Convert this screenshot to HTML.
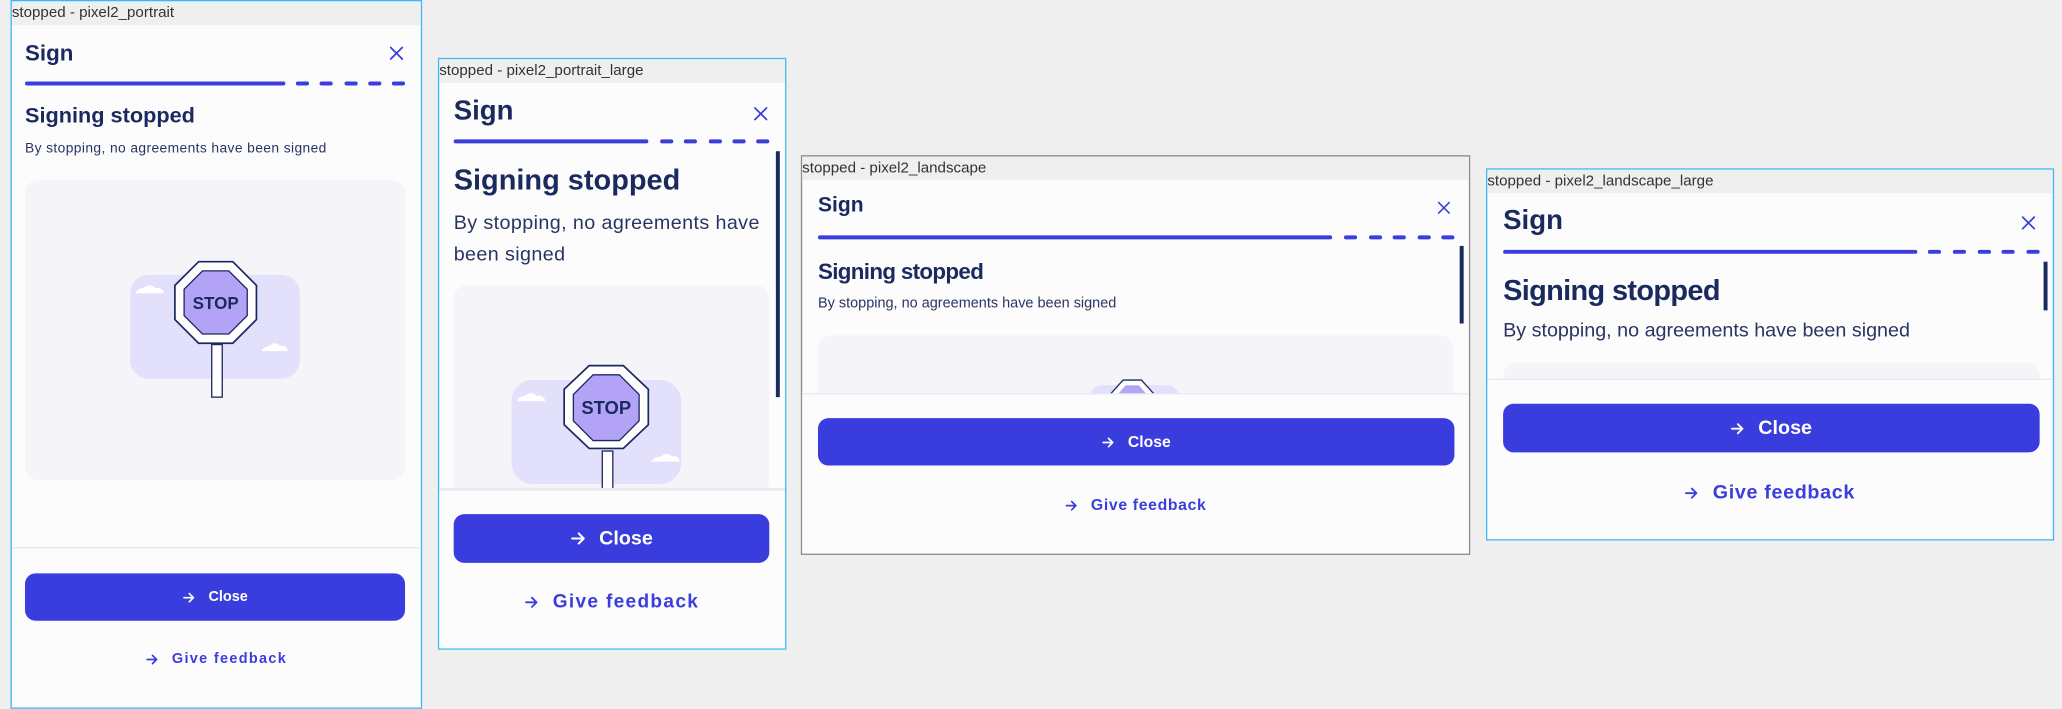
<!DOCTYPE html>
<html><head><meta charset="utf-8"><style>
*{margin:0;padding:0;box-sizing:border-box}
html,body{width:2062px;height:709px;overflow:hidden;background:#efefef;font-family:"Liberation Sans",sans-serif}
#w{position:absolute;left:0;top:0;width:1568px;height:539px;transform:scale(1.31505);transform-origin:0 0}
.f{position:absolute;background:#fcfcfd;border:1px solid #3bb8f0;overflow:hidden}
.lab{position:absolute;left:0;top:0;right:0;height:18px;background:#efefef;color:#333;font-size:11.5px;line-height:18px}
.a{position:absolute}
.nv{color:#1a2a5e;font-weight:bold}
.x{position:absolute}
.solid{position:absolute;height:3px;background:#3b3ddc;border-radius:2px}
.dash{position:absolute;height:3px;display:flex;justify-content:space-between}
.dash i{display:block;width:10px;height:3px;background:#3b3ddc;border-radius:2px}
.ill{position:absolute;background:#f4f4f9;border-radius:10px;overflow:hidden}
.btn{position:absolute;background:#3a3ddd;border-radius:8px;color:#fff;font-weight:bold;display:flex;align-items:center;justify-content:center}
.fb{position:absolute;color:#3b3ddc;font-weight:bold;display:flex;align-items:center;justify-content:center;letter-spacing:1px}
.div{position:absolute;left:0;right:0;height:1px;background:#e8e8ee}
.sb{position:absolute;width:3px;background:#1a2a5e}
.sub{color:#2a3463}
svg.ar{margin-right:11px}
</style></head><body><div id="w">
<svg width="0" height="0" style="position:absolute"><defs>
<symbol id="arw" viewBox="0 0 10 10"><path d="M1 5H9M5.5 1.5L9 5L5.5 8.5" fill="none" stroke="currentColor" stroke-width="1.4" stroke-linecap="round" stroke-linejoin="round"/></symbol>
<symbol id="xx" viewBox="0 0 10 10"><path d="M1 1L9 9M9 1L1 9" fill="none" stroke="#3b3ddc" stroke-width="1.2" stroke-linecap="round"/></symbol>
</defs></svg>

<!-- Frame 1 -->
<div class="f" style="left:8px;top:0;width:313px;height:539px">
<div class="lab">stopped - pixel2_portrait</div>
<div class="a nv" style="left:10px;top:30px;font-size:17px">Sign</div>
<svg class="x" style="left:287px;top:34px" width="11" height="11"><use href="#xx"/></svg>
<div class="solid" style="left:10px;top:61px;width:198px"></div>
<div class="dash" style="left:216px;top:61px;width:83px"><i></i><i></i><i></i><i></i><i></i></div>
<div class="a nv" style="left:10px;top:78px;font-size:16.5px">Signing stopped</div>
<div class="a sub" style="left:10px;top:106px;font-size:10.5px;letter-spacing:.3px">By stopping, no agreements have been signed</div>
<div class="ill" style="left:10px;top:136px;width:289px;height:228px">
<svg width="289" height="228" viewBox="0 0 289 228" style="position:absolute;left:0;top:0">
<rect x="80" y="72" width="129" height="79" rx="14" fill="#e3e0fb"/>
<path d="M80 86 H106 Q104 81 99 82 Q95 78 90 82 Q86 82 84 86 Z" fill="#fff"/>
<path d="M180 130 H200 Q199 125 194 126 Q190 122 186 126 Q182 126 180 130 Z" fill="#fff"/>
<rect x="142" y="125" width="8" height="40" fill="#fff" stroke="#1a2a5e" stroke-width="1"/>
<polygon points="132,62 158,62 176,80 176,106 158,124 132,124 114,106 114,80" fill="#fff" stroke="#1a2a5e" stroke-width="1.3"/>
<polygon points="135,69 155,69 169,83 169,103 155,117 135,117 121,103 121,83" fill="#b3a3f7" stroke="#1a2a5e" stroke-width="1"/>
<text x="145" y="98" text-anchor="middle" font-family="Liberation Sans" font-weight="bold" font-size="13" fill="#1a2a5e">STOP</text>
</svg></div>
<div class="div" style="top:415px"></div>
<div class="btn" style="left:10px;top:435px;width:289px;height:36px;font-size:11px"><svg class="ar" width="9" height="9" style="color:#fff"><use href="#arw"/></svg>Close</div>
<div class="fb" style="left:0;width:311px;top:494px;font-size:11px"><svg class="ar" width="9" height="9"><use href="#arw"/></svg>Give feedback</div>
</div>

<!-- Frame 2 -->
<div class="f" style="left:333px;top:44px;width:265px;height:450px">
<div class="lab">stopped - pixel2_portrait_large</div>
<div class="a nv" style="left:11px;top:28px;font-size:21px">Sign</div>
<svg class="x" style="left:239px;top:36px" width="11" height="11"><use href="#xx"/></svg>
<div class="solid" style="left:11px;top:61px;width:148px"></div>
<div class="dash" style="left:168px;top:61px;width:83px"><i></i><i></i><i></i><i></i><i></i></div>
<div class="sb" style="left:256px;top:70px;height:187px"></div>
<div class="a nv" style="left:11px;top:79px;font-size:22px">Signing stopped</div>
<div class="a sub" style="left:11px;top:113px;font-size:15px;line-height:24px;width:235px;letter-spacing:.3px">By stopping, no agreements have been signed</div>
<div class="ill" style="left:11px;top:172px;width:240px;height:160px">
<svg width="240" height="160" viewBox="0 0 240 160" style="position:absolute;left:0;top:0">
<rect x="44" y="72" width="129" height="79" rx="16" fill="#e3e0fb"/>
<path d="M44 88 H70 Q68 83 63 84 Q59 80 54 84 Q50 84 48 88 Z" fill="#fff"/>
<path d="M150 134 H172 Q171 129 166 130 Q162 126 158 130 Q153 130 150 134 Z" fill="#fff"/>
<rect x="113" y="126" width="8" height="40" fill="#fff" stroke="#1a2a5e" stroke-width="1"/>
<polygon points="103,61 129,61 148,79 148,106 129,124 103,124 84,106 84,79" fill="#fff" stroke="#1a2a5e" stroke-width="1.3"/>
<polygon points="106,68 126,68 141,83 141,103 126,118 106,118 91,103 91,83" fill="#b3a3f7" stroke="#1a2a5e" stroke-width="1"/>
<text x="116" y="98" text-anchor="middle" font-family="Liberation Sans" font-weight="bold" font-size="14" fill="#1a2a5e">STOP</text>
</svg></div>
<div class="div" style="top:326px;height:2px"></div>
<div style="position:absolute;left:0;right:0;top:328px;bottom:0;background:#fcfcfd"></div>
<div class="btn" style="left:11px;top:346px;width:240px;height:37px;font-size:15px"><svg class="ar" width="11" height="11" style="color:#fff"><use href="#arw"/></svg>Close</div>
<div class="fb" style="left:0;width:263px;top:405px;font-size:14.5px"><svg class="ar" width="10" height="10"><use href="#arw"/></svg>Give feedback</div>
</div>

<!-- Frame 3 -->
<div class="f" style="left:609px;top:118px;width:509px;height:304px;border-color:#8a8a8a">
<div class="lab">stopped - pixel2_landscape</div>
<div class="a nv" style="left:12px;top:29px;font-size:16px">Sign</div>
<svg class="x" style="left:483px;top:34px" width="10" height="10"><use href="#xx"/></svg>
<div class="solid" style="left:12px;top:60px;width:391px"></div>
<div class="dash" style="left:412px;top:60px;width:84px"><i></i><i></i><i></i><i></i><i></i></div>
<div class="sb" style="left:500px;top:68px;height:59px"></div>
<div class="a nv" style="left:12px;top:78px;font-size:17px;letter-spacing:-.5px">Signing stopped</div>
<div class="a sub" style="left:12px;top:106px;font-size:11px">By stopping, no agreements have been signed</div>
<div class="ill" style="left:12px;top:136px;width:483px;height:60px">
<svg width="483" height="60" style="position:absolute;left:0;top:0">
<rect x="207" y="38" width="67" height="40" rx="8" fill="#e3e0fb"/>
<polygon points="232,34 246,34 255,44 255,60 223,60 223,44" fill="#fff" stroke="#1a2a5e" stroke-width="1"/>
<polygon points="234,38 244,38 251,46 251,60 227,60 227,46" fill="#b3a3f7"/>
</svg></div>
<div class="div" style="top:180px"></div>
<div style="position:absolute;left:0;right:0;top:181px;bottom:0;background:#fcfcfd"></div>
<div class="btn" style="left:12px;top:199px;width:484px;height:36px;font-size:12px"><svg class="ar" width="9" height="9" style="color:#fff"><use href="#arw"/></svg>Close</div>
<div class="fb" style="left:0;width:507px;top:258px;font-size:12px;letter-spacing:.5px"><svg class="ar" width="9" height="9"><use href="#arw"/></svg>Give feedback</div>
</div>

<!-- Frame 4 -->
<div class="f" style="left:1130px;top:128px;width:432px;height:283px">
<div class="lab">stopped - pixel2_landscape_large</div>
<div class="a nv" style="left:12px;top:27px;font-size:21px">Sign</div>
<svg class="x" style="left:406px;top:35px" width="11" height="11"><use href="#xx"/></svg>
<div class="solid" style="left:12px;top:61px;width:315px"></div>
<div class="dash" style="left:335px;top:61px;width:85px"><i></i><i></i><i></i><i></i><i></i></div>
<div class="sb" style="left:423px;top:70px;height:37px"></div>
<div class="a nv" style="left:12px;top:79px;font-size:22px;letter-spacing:-.5px">Signing stopped</div>
<div class="a sub" style="left:12px;top:114px;font-size:15px">By stopping, no agreements have been signed</div>
<div class="ill" style="left:12px;top:147px;width:408px;height:20px"></div>
<div class="div" style="top:159px"></div>
<div style="position:absolute;left:0;right:0;top:160px;bottom:0;background:#fcfcfd"></div>
<div class="btn" style="left:12px;top:178px;width:408px;height:37px;font-size:15px"><svg class="ar" width="10" height="10" style="color:#fff"><use href="#arw"/></svg>Close</div>
<div class="fb" style="left:0;width:430px;top:237px;font-size:15px;letter-spacing:.5px"><svg class="ar" width="10" height="10"><use href="#arw"/></svg>Give feedback</div>
</div>

</div></body></html>
